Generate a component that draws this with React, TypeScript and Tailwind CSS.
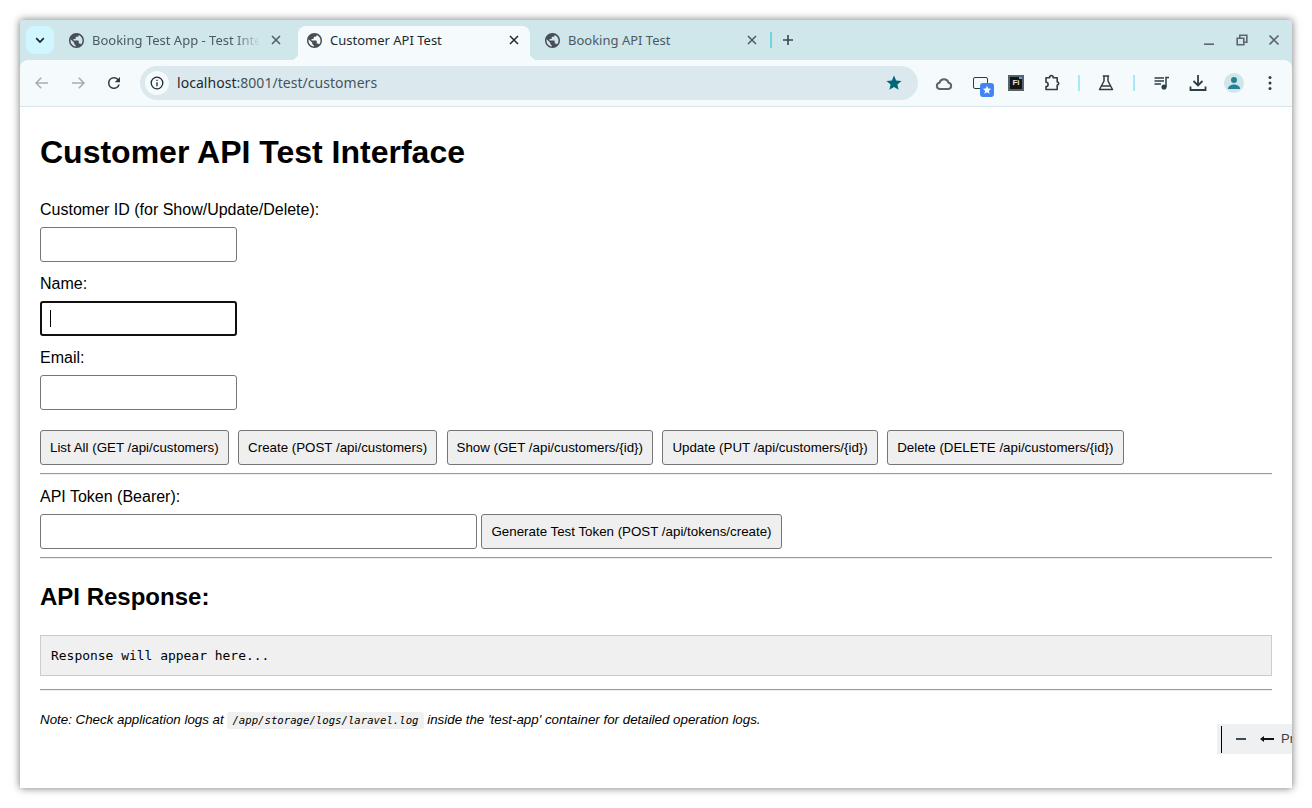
import React from "react";

const Globe = () => (
  <svg width="15" height="15" viewBox="2 2 20 20" className="shrink-0" fill="#474f54">
    <path d="M12 2C6.48 2 2 6.48 2 12s4.48 10 10 10 10-4.48 10-10S17.52 2 12 2zm-1 17.93c-3.95-.49-7-3.85-7-7.93 0-.62.08-1.21.21-1.79L9 15v1c0 1.1.9 2 2 2v1.93zm6.9-2.54c-.26-.81-1-1.39-1.9-1.39h-1v-3c0-.55-.45-1-1-1H8v-2h2c.55 0 1-.45 1-1V7h2c1.1 0 2-.9 2-2v-.41c2.93 1.19 5 4.06 5 7.41 0 2.08-.8 3.97-2.1 5.39z" />
  </svg>
);

const CloseX = ({ color }: { color: string }) => (
  <svg width="10" height="10" viewBox="0 0 10 10" className="shrink-0" fill="none" stroke={color} strokeWidth={1.5}>
    <path d="M1 1l8 8M9 1l-8 8" />
  </svg>
);

function Tab({ title, active, fade }: { title: string; active?: boolean; fade?: boolean }) {
  return (
    <div className="w-[238px] shrink-0">
      <div className={`relative flex h-[34px] w-[232px] items-center rounded-t-[8px] pb-[6px] pl-[9px] ${active ? "bg-[#f5fafc] text-[#1e2a30]" : "text-[#4c5a61]"}`}>
        <Globe />
        <span className={`ml-[8px] flex-1 overflow-hidden whitespace-nowrap text-[13px] leading-[18px] ${fade ? "[mask-image:linear-gradient(to_right,black_85%,transparent)]" : ""}`}>
          {title}
        </span>
        <span className="flex w-[32px] shrink-0 justify-center">
          <CloseX color={active ? "#1e2a30" : "#4c5a61"} />
        </span>
        {active && (
          <>
            <span className="absolute bottom-0 left-[-8px] size-[8px] bg-[radial-gradient(circle_at_0_0,transparent_8px,#f5fafc_8.5px)]" />
            <span className="absolute bottom-0 right-[-8px] size-[8px] bg-[radial-gradient(circle_at_100%_0,transparent_8px,#f5fafc_8.5px)]" />
          </>
        )}
      </div>
    </div>
  );
}

const Sep = () => <div className="h-[16px] w-[2px] bg-[#a5eafa]" />;

const Cell = ({ children, w = "w-[36px]" }: { children: React.ReactNode; w?: string }) => (
  <div className={`flex shrink-0 items-center justify-center ${w}`}>{children}</div>
);

function TabStrip() {
  return (
    <div className="flex h-[40px] shrink-0 items-end bg-[#cfe6eb] pl-[6px]">
      <div className="mb-[6px] mr-[6px] flex size-[28px] shrink-0 items-center justify-center rounded-[8px] bg-[#d0f6ff]">
        <svg width="10" height="7" viewBox="0 0 10 7" fill="none" stroke="#13242b" strokeWidth="1.7">
          <path d="M1.2 1.2L5 5l3.8-3.800" />
        </svg>
      </div>
      <Tab title="Booking Test App - Test Inte" fade />
      <Tab title="Customer API Test" active />
      <Tab title="Booking API Test" />
      <div className="mb-[12px] ml-[-4px] h-[16px] w-[2px] shrink-0 bg-[#74cfe0]" />
      <div className="mb-[14px] ml-[10px] shrink-0">
        <svg width="12" height="12" viewBox="0 0 12 12" fill="none" stroke="#39484f" strokeWidth="1.6">
          <path d="M6 1v10M1 6h10" />
        </svg>
      </div>
      <div className="mb-[14px] ml-auto flex items-center gap-[20.5px] pr-[12px]">
        <svg width="12" height="12" viewBox="0 0 12 12" fill="none" stroke="#5c666b" strokeWidth="1.6">
          <path d="M1 10.200h10" />
        </svg>
        <svg width="12" height="12" viewBox="0 0 12 12" fill="none" stroke="#5c666b" strokeWidth="1.600">
          <path d="M1.200 4.200h6.600v6.600H1.200zM3.800 3.800V1.200h7v7H8" />
        </svg>
        <svg width="12" height="12" viewBox="0 0 12 12" fill="none" stroke="#5c666b" strokeWidth="1.700">
          <path d="M1.500 1.500l9 9M10.500 1.500l-9 9" />
        </svg>
      </div>
    </div>
  );
}

function Toolbar() {
  return (
    <div className="flex h-[47px] shrink-0 items-center rounded-t-[8px] border-b border-[#d6e3e8] bg-[#f5fafc] pl-[13px]">
      <svg width="18" height="18" viewBox="0 0 24 24" fill="none" stroke="#a6aeb2" strokeWidth="2">
        <path d="M20 12H5M11 5l-7 7 7 7" />
      </svg>
      <svg className="ml-[18px]" width="18" height="18" viewBox="0 0 24 24" fill="none" stroke="#a6aeb2" strokeWidth="2">
        <path d="M4 12h15M13 5l7 7-7 7" />
      </svg>
      <svg className="ml-[18px]" width="18" height="18" viewBox="0 0 24 24" fill="#2c3a41">
        <path d="M17.65 6.35A7.96 7.96 0 0 0 12 4a8 8 0 1 0 7.73 10h-2.08A6 6 0 1 1 12 6c1.66 0 3.14.69 4.22 1.78L13 11h7V4l-2.35 2.350z" />
      </svg>
      <div className="ml-[17px] mr-[8px] flex h-[34px] w-[778px] shrink-0 items-center rounded-[17px] bg-[#dbe9ee] pl-[5px] pr-[15px]">
        <div className="flex size-[24px] items-center justify-center rounded-full bg-[#f5fafc]">
          <svg width="14" height="14" viewBox="0 0 14 14" fill="none" stroke="#1f2a30" strokeWidth="1.3">
            <circle cx="7" cy="7" r="5.8" />
            <path d="M7 6.200v4M7 3.700v1.300" />
          </svg>
        </div>
        <div className="ml-[8px] flex-1 whitespace-nowrap text-[14px] leading-[18px] tracking-[0.035px] text-[#46555c]">
          <span className="text-[#1c2a31]">localhost</span>:8001/test/customers
        </div>
        <svg width="18" height="18" viewBox="0 0 24 24" fill="#00677a">
          <path d="M12 17.270L18.180 21l-1.640-7.030L22 9.240l-7.190-.610L12 2 9.190 8.630 2 9.240l5.460 4.730L5.820 21z" />
        </svg>
      </div>
      <Cell>
        <svg width="18" height="18" viewBox="0 0 18 18" fill="none" stroke="#5f666a" strokeWidth="2" strokeLinejoin="round">
          <path d="M5 15a3.200 3.200 0 0 1-.5-6.350a4.700 4.700 0 0 1 9 0A3.200 3.200 0 0 1 13 15z" />
        </svg>
      </Cell>
      <Cell>
        <div className="relative ml-[8px] size-[22px]">
          <div className="absolute left-0 top-[5px] h-[12px] w-[15px] rounded-[2px] border-[1.5px] border-[#2c3a41]" />
          <div className="absolute left-[7px] top-[11px] flex size-[14px] items-center justify-center rounded-[3px] bg-[#4285f4]">
            <svg width="10" height="10" viewBox="0 0 24 24" fill="#fff">
              <path d="M12 17.270L18.180 21l-1.640-7.030L22 9.240l-7.190-.610L12 2 9.190 8.630 2 9.240l5.460 4.730L5.820 21z" />
            </svg>
          </div>
        </div>
      </Cell>
      <Cell>
        <div className="relative flex size-[16px] items-center justify-center overflow-hidden border-[2px] border-[#55636d] bg-[#141414]">
          <span className="font-['Liberation_Sans',sans-serif] text-[8px] font-bold leading-[8px] text-[#e6e6e6]">Fi</span>
          <span className="absolute right-0 top-0 h-[2px] w-[3px] bg-[#6c9ad8]" />
        </div>
      </Cell>
      <Cell>
        <svg width="18" height="18" viewBox="0 0 18 18" fill="none" stroke="#2f3e45" strokeWidth="1.600" strokeLinejoin="round">
          <path d="M3 3.800h3.600a2 2 0 0 1 .5-1.700 1.800 1.800 0 0 1 2.600 0 2 2 0 0 1 .5 1.700h4v4.200a1.500 1.500 0 0 1 0 3v4.500H3v-3a2 2 0 0 0 0-4.200z" />
        </svg>
      </Cell>
      <Cell w="w-[18px]"><Sep /></Cell>
      <Cell>
        <svg width="18" height="18" viewBox="0 0 18 18" fill="none" stroke="#2f3e45" strokeWidth="1.500" strokeLinejoin="round">
          <path d="M5.800 2h6.400M7 2v5L2.500 15.500h13L11 7V2M5 12h8" />
        </svg>
      </Cell>
      <Cell w="w-[20px]"><Sep /></Cell>
      <Cell>
        <svg width="18" height="18" viewBox="0 0 18 18" fill="none" stroke="#2f3e45" strokeWidth="1.500">
          <path d="M1.500 4h9.500M1.500 7h9.500M1.500 10h6.500M13 13V3.500h3" />
          <circle cx="11" cy="13" r="1.800" fill="#2f3e45" />
        </svg>
      </Cell>
      <Cell>
        <svg width="18" height="18" viewBox="0 0 18 18" fill="none" stroke="#2f3e45" strokeWidth="1.800">
          <path d="M9 1v10M4.500 7L9 11.500 13.500 7M1.500 12.500v3.500h15v-3.500" />
        </svg>
      </Cell>
      <Cell>
        <div className="flex size-[20px] items-center justify-center overflow-hidden rounded-full bg-[#cfe6eb]">
          <svg width="14" height="14" viewBox="0 0 14 14" fill="#2b7f92">
            <circle cx="7" cy="4" r="3" />
            <path d="M1 13c0-3 3-4.500 6-4.500s6 1.500 6 4.500z" />
          </svg>
        </div>
      </Cell>
      <Cell>
        <svg width="18" height="18" viewBox="0 0 18 18" fill="#2f3e45">
          <circle cx="9" cy="3.500" r="1.500" />
          <circle cx="9" cy="9" r="1.500" />
          <circle cx="9" cy="14.500" r="1.500" />
        </svg>
      </Cell>
    </div>
  );
}

const inputCls = "block h-[35px] rounded-[3px] border border-[#767676] bg-white";
const btnCls =
  "h-[35px] rounded-[3px] border border-[#767676] bg-[#efefef] px-[9px] text-[13.333px] leading-[15px] text-black whitespace-nowrap";

const Hr = ({ className }: { className: string }) => <div className={`h-[2px] border-y border-t-[#9a9a9a] border-b-[#eeeeee] ${className}`} />;

function Page() {
  return (
    <div className="relative flex-1 overflow-hidden bg-white px-[20px] font-['Liberation_Sans',Arial,sans-serif] text-black">
      <h1 className="mt-[27px] text-[32px] font-bold leading-[37px]">Customer API Test Interface</h1>
      <div className="mt-[30px] text-[16px] leading-[18px]">Customer ID (for Show/Update/Delete):</div>
      <div className={`${inputCls} mt-[8px] w-[197px]`} />
      <div className="mt-[13px] text-[16px] leading-[18px]">Name:</div>
      <div className="mt-[8px] flex h-[35px] w-[197px] items-center rounded-[3px] border-2 border-[#101010] pl-[8px]">
        <div className="h-[17px] w-px bg-black" />
      </div>
      <div className="mt-[13px] text-[16px] leading-[18px]">Email:</div>
      <div className={`${inputCls} mt-[8px] w-[197px]`} />
      <div className="mt-[20px] flex gap-[9.45px]">
        <button className={btnCls}>List All (GET /api/customers)</button>
        <button className={btnCls}>Create (POST /api/customers)</button>
        <button className={btnCls}>Show (GET /api/customers/{"{id}"})</button>
        <button className={btnCls}>Update (PUT /api/customers/{"{id}"})</button>
        <button className={btnCls}>Delete (DELETE /api/customers/{"{id}"})</button>
      </div>
      <Hr className="mt-[8px]" />
      <div className="mt-[13px] text-[16px] leading-[18px]">API Token (Bearer):</div>
      <div className="mt-[8px] flex gap-[4px]">
        <div className={`${inputCls} w-[437px]`} />
        <button className={`${btnCls} w-[301px]`}>Generate Test Token (POST /api/tokens/create)</button>
      </div>
      <Hr className="mt-[8px]" />
      <h2 className="mt-[24px] text-[24px] font-bold leading-[27px]">API Response:</h2>
      <div className="mt-[25px] h-[41px] border border-[#cccccc] bg-[#f0f0f0] px-[10px] font-['DejaVu_Sans_Mono','Liberation_Mono',monospace] text-[12.96px] leading-[39px] text-black">
        Response will appear here...
      </div>
      <Hr className="mt-[13px]" />
      <p className="mt-[19px] text-[13.333px] italic leading-[20px]">
        Note: Check application logs at{" "}
        <code className="rounded-[3px] bg-[#f0f0f0] px-[5px] py-[2px] font-['DejaVu_Sans_Mono','Liberation_Mono',monospace] text-[10.67px]">
          /app/storage/logs/laravel.log
        </code>{" "}
        inside the 'test-app' container for detailed operation logs.
      </p>
      <div className="absolute bottom-[34px] right-0 flex h-[30px] w-[75px] items-center overflow-hidden bg-[#eef0f2] pl-[4px] text-[13px] text-[#3a4248]">
        <div className="h-[27px] w-px shrink-0 bg-black" />
        <div className="ml-[14px] h-[2px] w-[10px] shrink-0 bg-[#3c4a55]" />
        <svg className="ml-[14px] shrink-0" width="14" height="8" viewBox="0 0 14 8" fill="#111">
          <path d="M0 4l4-3v2h10v2H4v2z" />
        </svg>
        <span className="ml-[7px] whitespace-nowrap">Pr</span>
      </div>
    </div>
  );
}

export default function App() {
  return (
    <div className="h-[808px] w-[1312px] overflow-hidden bg-white p-[20px]">
      <div className="flex h-[768px] w-[1272px] flex-col bg-[#cfe6eb] font-['Noto_Sans',sans-serif] shadow-[0_0_8px_rgba(0,0,0,0.55)]">
        <TabStrip />
        <Toolbar />
        <Page />
      </div>
    </div>
  );
}
